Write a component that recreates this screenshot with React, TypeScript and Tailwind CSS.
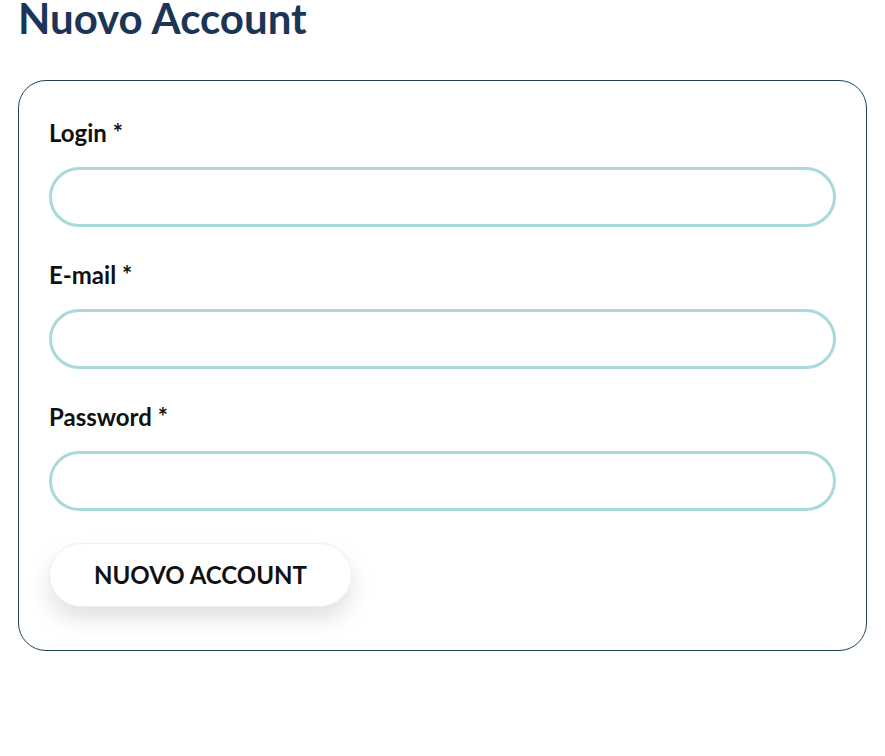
export default function App() {
  const fields = [
    { label: "Login *", type: "text" },
    { label: "E-mail *", type: "email" },
    { label: "Password *", type: "password" },
  ];

  return (
    <div className="min-h-screen bg-white px-[18px] font-['Lato','Noto_Sans',sans-serif]">
      <h1 className="text-[42px] font-bold leading-[36px] text-[#1c3557]">
        Nuovo Account
      </h1>

      <div className="mt-[44px] rounded-[28px] border border-[#1e4155] px-[30px] pt-[38px] pb-[43px]">
        <form className="flex flex-col">
          {fields.map((f) => (
            <div key={f.label} className="mb-[34px] flex flex-col">
              <label className="mb-[20px] text-[24px] font-bold leading-[28px] text-[#111]">
                {f.label}
              </label>
              <input
                type={f.type}
                className="h-[60px] w-full rounded-full border-[3px] border-[#a8dadc] bg-white px-6 outline-none"
              />
            </div>
          ))}

          <button
            type="button"
            className="-mt-[2px] h-[64px] w-[303px] rounded-full border border-[#eeeeee] bg-white text-[24px] font-bold uppercase text-[#111] shadow-[0_12px_22px_rgba(0,0,0,0.12)]"
          >
            Nuovo Account
          </button>
        </form>
      </div>
    </div>
  );
}
